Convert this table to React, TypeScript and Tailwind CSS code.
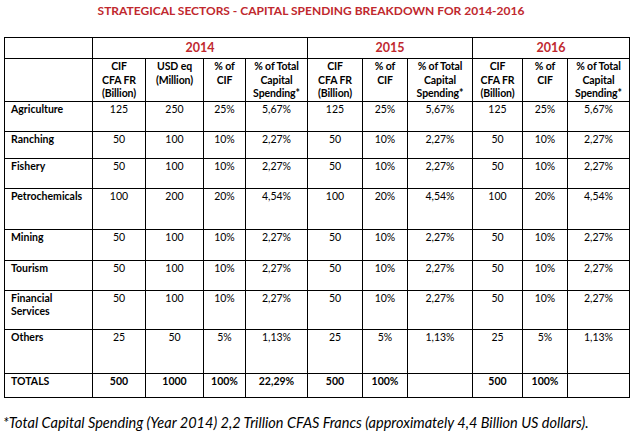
import React from 'react'

type Row = {
  label: string
  h: string
  y14: string[]
  y15: string[]
  y16: string[]
  bold?: boolean
}

const rows: Row[] = [
  { label: 'Agriculture', h: 'h-[30px]', y14: ['125', '250', '25%', '5,67%'], y15: ['125', '25%', '5,67%'], y16: ['125', '25%', '5,67%'] },
  { label: 'Ranching', h: 'h-[27px]', y14: ['50', '100', '10%', '2,27%'], y15: ['50', '10%', '2,27%'], y16: ['50', '10%', '2,27%'] },
  { label: 'Fishery', h: 'h-[30px]', y14: ['50', '100', '10%', '2,27%'], y15: ['50', '10%', '2,27%'], y16: ['50', '10%', '2,27%'] },
  { label: 'Petrochemicals', h: 'h-[41px]', y14: ['100', '200', '20%', '4,54%'], y15: ['100', '20%', '4,54%'], y16: ['100', '20%', '4,54%'] },
  { label: 'Mining', h: 'h-[31px]', y14: ['50', '100', '10%', '2,27%'], y15: ['50', '10%', '2,27%'], y16: ['50', '10%', '2,27%'] },
  { label: 'Tourism', h: 'h-[30px]', y14: ['50', '100', '10%', '2,27%'], y15: ['50', '10%', '2,27%'], y16: ['50', '10%', '2,27%'] },
  { label: 'Financial Services', h: 'h-[39px]', y14: ['50', '100', '10%', '2,27%'], y15: ['50', '10%', '2,27%'], y16: ['50', '10%', '2,27%'] },
  { label: 'Others', h: 'h-[44px]', y14: ['25', '50', '5%', '1,13%'], y15: ['25', '5%', '1,13%'], y16: ['25', '5%', '1,13%'] },
  { label: 'TOTALS', h: 'h-[24px]', y14: ['500', '1000', '100%', '22,29%'], y15: ['500', '100%', ''], y16: ['500', '100%', ''], bold: true },
]

const cell = 'border border-black align-top text-center px-[1px] pt-[1px]'

function HeadCell({ lines }: { lines: string[] }) {
  return (
    <th className={cell + ' font-bold tracking-[-0.1px]'}>
      {lines.map((l, i) => (
        <div key={i}>{l}</div>
      ))}
    </th>
  )
}

export default function App() {
  const cif = ['CIF', 'CFA FR', '(Billion)']
  const pctCif = ['% of', 'CIF']
  const pctTotal = ['% of Total', 'Capital', 'Spending*']

  return (
    <div className="w-[634px] h-[438px] bg-white text-black font-['Lato',sans-serif] overflow-hidden">
      <div className="h-[37px] pt-[2px] pr-[12px] text-center text-[12px] leading-[18px] font-bold text-[#c0282e]">
        STRATEGICAL SECTORS - CAPITAL SPENDING BREAKDOWN FOR 2014-2016
      </div>
      <table className="ml-[4px] w-[626px] table-fixed border-collapse text-[10.5px] leading-[13.5px]">
        <colgroup>
          <col className="w-[88px]" />
          <col className="w-[53px]" />
          <col className="w-[58px]" />
          <col className="w-[42px]" />
          <col className="w-[62px]" />
          <col className="w-[55px]" />
          <col className="w-[45px]" />
          <col className="w-[65px]" />
          <col className="w-[50px]" />
          <col className="w-[45px]" />
          <col className="w-[62px]" />
        </colgroup>
        <thead>
          <tr className="h-[21px]">
            <th className="border border-black"></th>
            <th colSpan={4} className="border border-black text-[12.5px] font-bold text-[#c0282e] align-middle">2014</th>
            <th colSpan={3} className="border border-black text-[12.5px] font-bold text-[#c0282e] align-middle">2015</th>
            <th colSpan={3} className="border border-black text-[12.5px] font-bold text-[#c0282e] align-middle">2016</th>
          </tr>
          <tr className="h-[40px]">
            <th className="border border-black"></th>
            <HeadCell lines={cif} />
            <HeadCell lines={['USD eq', '(Million)']} />
            <HeadCell lines={pctCif} />
            <HeadCell lines={pctTotal} />
            <HeadCell lines={cif} />
            <HeadCell lines={pctCif} />
            <HeadCell lines={pctTotal} />
            <HeadCell lines={cif} />
            <HeadCell lines={pctCif} />
            <HeadCell lines={pctTotal} />
          </tr>
        </thead>
        <tbody>
          {rows.map((r) => (
            <tr key={r.label} className={r.h}>
              <td className="border border-black align-top text-left pl-[6px] pr-[2px] pt-[1px] font-bold">{r.label}</td>
              {[...r.y14, ...r.y15, ...r.y16].map((v, i) => (
                <td key={i} className={cell + (r.bold ? ' font-bold' : '')}>
                  {v}
                </td>
              ))}
            </tr>
          ))}
        </tbody>
      </table>
      <div className="pl-[3px] pt-[15px] text-[14.5px] leading-[20px] italic">
        *Total Capital Spending (Year 2014) 2,2 Trillion CFAS Francs (approximately 4,4 Billion US dollars).
      </div>
    </div>
  )
}
